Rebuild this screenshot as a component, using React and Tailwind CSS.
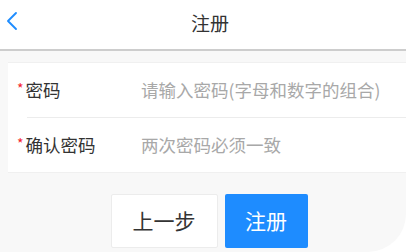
import { ChevronLeft } from 'lucide-react';

const font = { fontFamily: '"Noto Sans CJK SC", "Noto Sans", sans-serif' };

const Field = ({ label, placeholder }) => (
  <div className="h-[54px] flex items-center pl-[9px]">
    <div className="w-[124px] flex items-center shrink-0">
      <span className="text-[#f5222d] text-[14px] leading-none -mt-[5px] mr-[2px]">*</span>
      <span className="text-[17.5px] text-[#333]">{label}</span>
    </div>
    <input
      className="flex-1 min-w-0 outline-none bg-transparent text-[17.5px] text-[#333] placeholder:text-[#a8a8a8]"
      placeholder={placeholder}
      type="password"
    />
  </div>
);

export default function App() {
  return (
    <div className="w-[406px] h-[252px] bg-white overflow-hidden" style={font}>
      <div className="h-full bg-[#f8f8f8] rounded-br-[38px] flex flex-col">
        {/* Header */}
        <div className="h-[51px] shrink-0 bg-white border-b-2 border-[#cdcdcd] relative flex items-center justify-center">
          <button className="absolute -left-[4px] top-[5px] text-[#1e8cff]">
            <ChevronLeft className="w-8 h-8" strokeWidth={1.4} />
          </button>
          <span className="text-[19px] text-[#333] -mt-[2px] ml-[14px]">注册</span>
        </div>

        {/* Form card */}
        <div className="mt-[11px] ml-2 bg-white border-y border-[#f0f0f0]">
          <Field label="密码" placeholder="请输入密码(字母和数字的组合)" />
          <div className="ml-[19px] border-t border-[#ececec]" />
          <Field label="确认密码" placeholder="两次密码必须一致" />
        </div>

        {/* Actions */}
        <div className="mt-[21px] flex justify-center gap-[7px] pl-[12px]">
          <button className="w-[107px] h-[54px] bg-white border border-[#ececec] rounded-[2px] text-[21px] text-[#333]">
            上一步
          </button>
          <button className="w-[83px] h-[54px] bg-[#1e8cff] rounded-[2px] text-[21px] text-white">
            注册
          </button>
        </div>
      </div>
    </div>
  );
}
